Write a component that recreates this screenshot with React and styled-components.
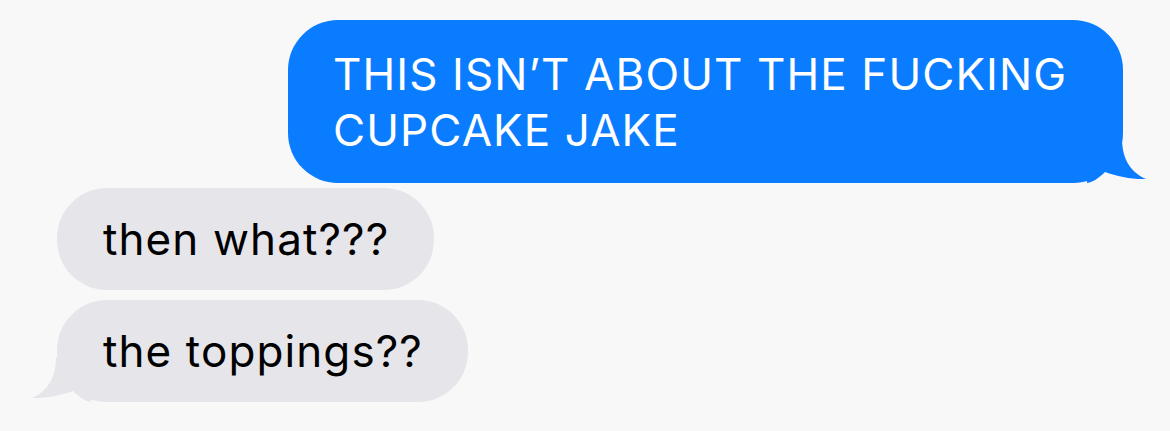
import React from 'react';
import styled, { createGlobalStyle } from 'styled-components';

const GlobalStyle = createGlobalStyle`
  html, body {
    margin: 0;
    padding: 0;
    background: #f8f8f8;
  }
  body {
    font-family: Inter, "Liberation Sans", sans-serif;
  }
`;

const Thread = styled.div`
  width: 1170px;
  height: 431px;
  box-sizing: border-box;
  padding: 20px 47px 0 57px;
  display: flex;
  flex-direction: column;
  overflow: hidden;
`;

const Row = styled.div`
  display: flex;
  justify-content: ${props => props.mine ? 'flex-end' : 'flex-start'};
  margin-top: ${props => props.gap}px;
`;

const Bubble = styled.div`
  position: relative;
  box-sizing: border-box;
  padding: ${props => props.mine ? '26px 40px 25px 45px' : '23px 45px 23px 46px'};
  border-radius: 50px;
  background: ${props => props.mine ? '#0a7cff' : '#e6e5ea'};
  color: ${props => props.mine ? '#ffffff' : '#000000'};
  font-size: 44px;
  line-height: 56px;
  letter-spacing: 1.1px;
  width: ${props => props.width ? props.width + 'px' : 'auto'};
`;

// speech-bubble tail, drawn for the left side and flipped for outgoing messages
const TailSvg = styled.svg`
  position: absolute;
  bottom: 0;
  width: 60px;
  height: 45px;
  ${props => props.mine
    ? 'right: -24px; transform: scaleX(-1);'
    : 'left: -26px;'}
`;

const Tail = ({ mine }) => (
  <TailSvg mine={mine} viewBox="0 0 60 45">
    <path
      d="M25 0 C25 18 19 33 1 41 C15 41.5 30 38.5 42 34 C48 40 54 44 60 45 L60 0 Z"
      fill={mine ? '#0a7cff' : '#e6e5ea'}
    />
  </TailSvg>
);

export default function App() {
  return (
    <>
      <GlobalStyle />
      <Thread>
        <Row mine gap={0}>
          <Bubble mine width={835}>
            THIS ISN’T ABOUT THE FUCKING<br />CUPCAKE JAKE
            <Tail mine />
          </Bubble>
        </Row>
        <Row gap={5}>
          <Bubble>then what???</Bubble>
        </Row>
        <Row gap={10}>
          <Bubble>
            the toppings??
            <Tail />
          </Bubble>
        </Row>
      </Thread>
    </>
  );
}
